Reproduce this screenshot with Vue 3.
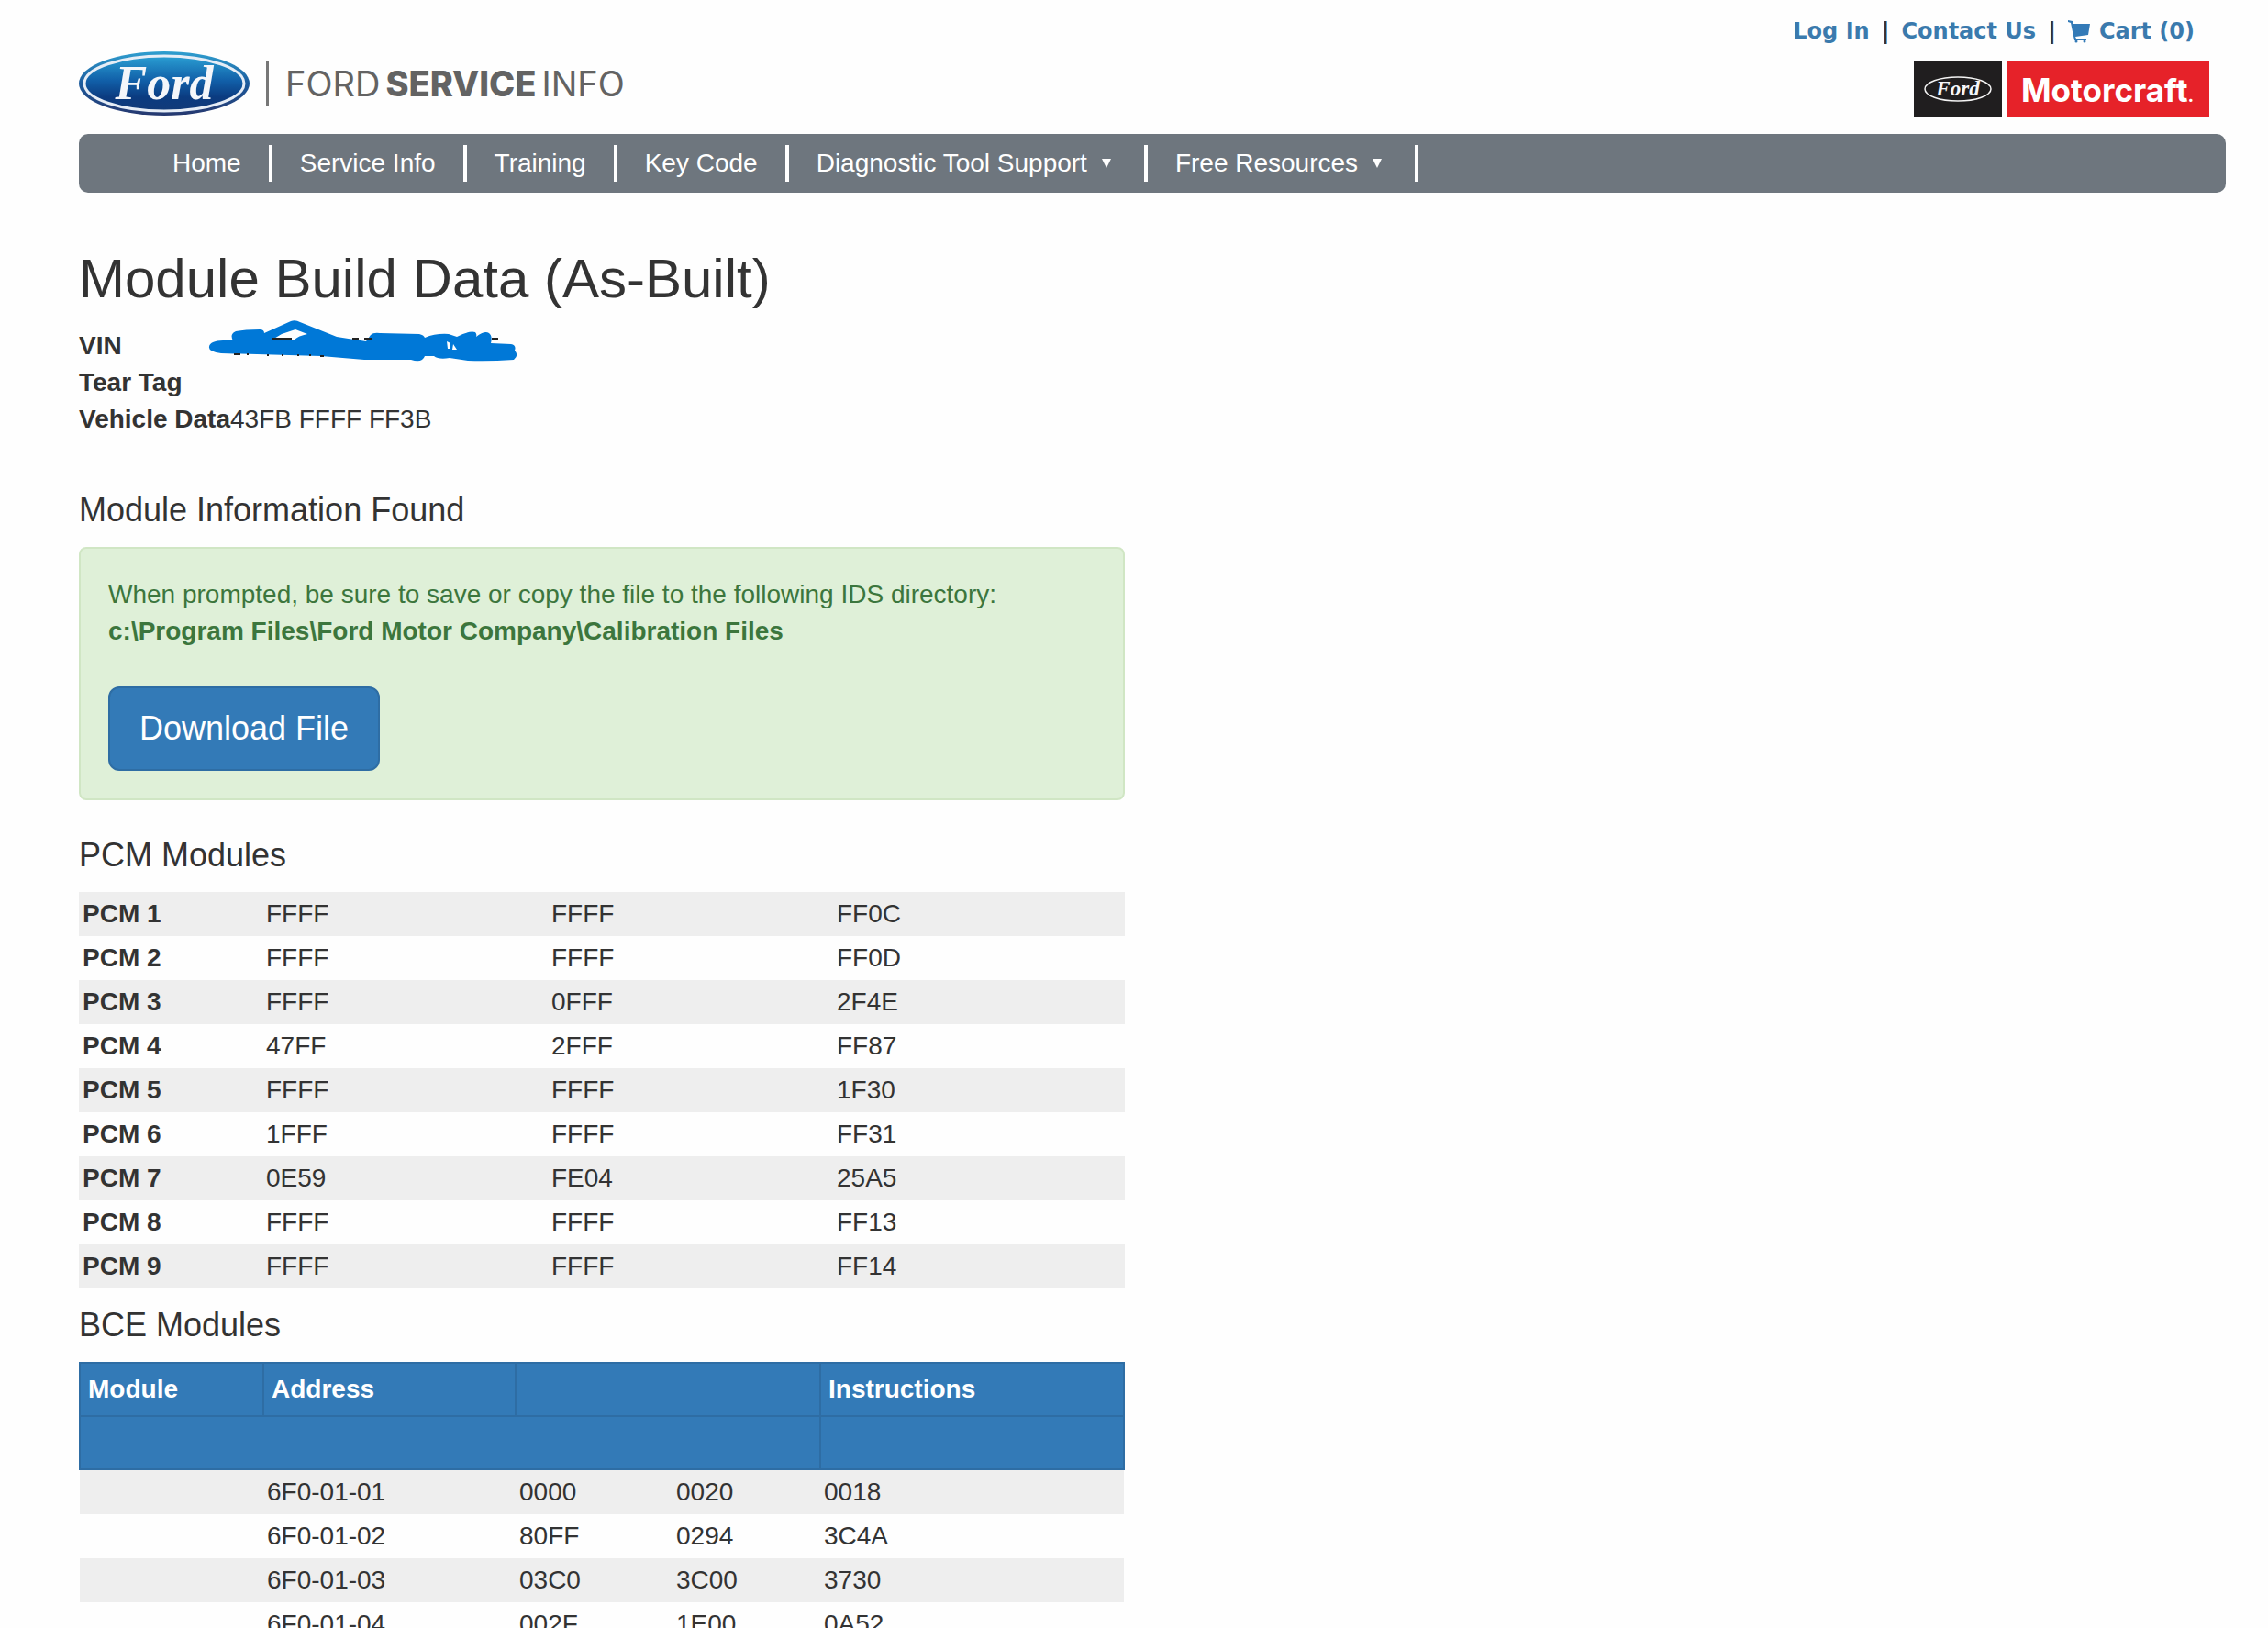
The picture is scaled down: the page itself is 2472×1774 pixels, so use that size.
<script setup>
const navItems = [
    { text: 'Home' },
    { text: 'Service Info' },
    { text: 'Training' },
    { text: 'Key Code' },
    { text: 'Diagnostic Tool Support', menu: true },
    { text: 'Free Resources', menu: true }
]

const pcmModules = [
    ['PCM 1', 'FFFF', 'FFFF', 'FF0C'],
    ['PCM 2', 'FFFF', 'FFFF', 'FF0D'],
    ['PCM 3', 'FFFF', '0FFF', '2F4E'],
    ['PCM 4', '47FF', '2FFF', 'FF87'],
    ['PCM 5', 'FFFF', 'FFFF', '1F30'],
    ['PCM 6', '1FFF', 'FFFF', 'FF31'],
    ['PCM 7', '0E59', 'FE04', '25A5'],
    ['PCM 8', 'FFFF', 'FFFF', 'FF13'],
    ['PCM 9', 'FFFF', 'FFFF', 'FF14']
]

const bceModules = [
    ['6F0-01-01', '0000', '0020', '0018'],
    ['6F0-01-02', '80FF', '0294', '3C4A'],
    ['6F0-01-03', '03C0', '3C00', '3730'],
    ['6F0-01-04', '002F', '1E00', '0A52']
]
</script>

<template>
    <div class="page">
        <header class="siteHeader">
            <a class="siteLogo" href="#">
                <svg class="fordOval" viewBox="0 0 186 72" role="img" aria-label="Ford">
                    <defs>
                        <linearGradient id="ovalRim" x1="0" y1="0" x2="0" y2="1">
                            <stop offset="0" stop-color="#2f9fd0" />
                            <stop offset="0.5" stop-color="#1c5a9c" />
                            <stop offset="1" stop-color="#26386f" />
                        </linearGradient>
                        <linearGradient id="ovalFill" x1="0" y1="0" x2="0" y2="1">
                            <stop offset="0" stop-color="#2a9fd3" />
                            <stop offset="0.45" stop-color="#115fa8" />
                            <stop offset="0.75" stop-color="#0b3b80" />
                            <stop offset="1" stop-color="#123a78" />
                        </linearGradient>
                    </defs>
                    <ellipse cx="93" cy="36" rx="93" ry="35" fill="url(#ovalRim)" />
                    <ellipse cx="93" cy="36" rx="87" ry="30" fill="url(#ovalFill)" stroke="#e6edf6" stroke-width="3" />
                    <text class="script" x="93" y="53" font-size="52" text-anchor="middle">Ford</text>
                </svg>
                <span class="logoRule"></span>
                <span class="logoText"><span>FORD</span><b>SERVICE</b><span>INFO</span></span>
            </a>
            <div class="headerRight">
                <div class="userLinks">
                    <a href="#">Log In</a>
                    <span class="bar">|</span>
                    <a href="#">Contact Us</a>
                    <span class="bar">|</span>
                    <a class="cart" href="#">
                        <svg class="cartIcon" viewBox="0 0 24 25" aria-hidden="true">
                            <path d="M0 0L5 1L6 4H24L22 16L8 18L9 20H20V22H7L3 3L0 2z" />
                            <circle cx="9" cy="23" r="1.5" />
                            <circle cx="18" cy="23" r="1.5" />
                        </svg>
                        <span>Cart (0)</span>
                    </a>
                </div>
                <div class="brands">
                    <svg class="fordBadge" viewBox="0 0 96 60" role="img" aria-label="Ford">
                        <rect width="96" height="60" fill="#201e1f" />
                        <ellipse cx="48" cy="30" rx="36" ry="13" fill="none" stroke="#f4f4f4" stroke-width="1.5" />
                        <text class="script" x="48" y="37" font-size="23" text-anchor="middle">Ford</text>
                    </svg>
                    <span class="motorcraft">Motorcraft<small>.</small></span>
                </div>
            </div>
        </header>

        <nav class="mainNav">
            <a v-for="item in navItems" :key="item.text" href="#">
                {{ item.text }}
                <span v-if="item.menu" class="caret"></span>
            </a>
        </nav>

        <main class="content">
            <h1>Module Build Data (As-Built)</h1>
            <dl class="vehicle">
                <dt>VIN</dt>
                <dd class="vin">
                    <!-- VIN is scribbled out -->
                    <svg class="scribble" viewBox="0 0 340 60" role="img" aria-label="VIN hidden">
                        <path class="ink" d="M5 31Q9 29 16 29L27 29Q23 22 30 19Q40 17 56 17Q61 17 61 21L90 8Q95 6 100 9L140 25L172 30L177 23Q180 20 187 21L230 22Q235 23 236 26Q248 21 262 22L271 25Q285 18 291 20Q293 22 292 25Q301 18 306 21Q310 24 308 32L330 33Q336 34 334 40Q339 45 333 50Q305 52 283 51L263 48Q251 50 246 46H236Q233 54 221 50H170L123 46L14 43Q0 41 1 36Q1 33 5 31Z" />
                        <path class="gap" d="M70 28L80 22L95 17L108 22Q98 24 94 28Z M260 30L264 32V38H261Z M267 33L271 39H266Z" />
                        <path class="remains" d="M70 27h21M157 27h7M170 27h8M309 27h7M28 44h7M42 44h2M64 45h2M80 45h2M97 45h2M110 45h2M122 46h4" />
                    </svg>
                </dd>
                <dt>Tear Tag</dt>
                <dd></dd>
                <dt>Vehicle Data</dt>
                <dd>43FB FFFF FF3B</dd>
            </dl>

            <h2>Module Information Found</h2>
            <div class="alert">
                <p>When prompted, be sure to save or copy the file to the following IDS directory:</p>
                <p><strong>c:\Program Files\Ford Motor Company\Calibration Files</strong></p>
                <button type="button" class="downloadButton">Download File</button>
            </div>

            <h2>PCM Modules</h2>
            <table class="pcmTable">
                <colgroup>
                    <col class="pcmName">
                    <col class="pcmValue">
                    <col class="pcmValue">
                    <col>
                </colgroup>
                <tbody>
                    <tr v-for="row in pcmModules" :key="row[0]">
                        <th scope="row">{{ row[0] }}</th>
                        <td v-for="(value, i) in row.slice(1)" :key="i">{{ value }}</td>
                    </tr>
                </tbody>
            </table>

            <h2>BCE Modules</h2>
            <table class="bceTable">
                <colgroup>
                    <col class="bceModule">
                    <col class="bceAddress">
                    <col class="bceFirst">
                    <col class="bceSecond">
                    <col>
                </colgroup>
                <thead>
                    <tr>
                        <th>Module</th>
                        <th>Address</th>
                        <th colspan="2"></th>
                        <th>Instructions</th>
                    </tr>
                    <tr>
                        <th colspan="4"></th>
                        <th></th>
                    </tr>
                </thead>
                <tbody>
                    <tr v-for="row in bceModules" :key="row[0]">
                        <td></td>
                        <td v-for="(value, i) in row" :key="i">{{ value }}</td>
                    </tr>
                </tbody>
            </table>
        </main>
    </div>
</template>

<style>
body {
    margin: 0;
    background-color: #fefefe;
}
</style>

<style scoped>
.page {
    box-sizing: border-box;
    height: 100vh;
    overflow: hidden;
    padding: 0 46px 0 86px;
    font-family: "Liberation Sans", Arial, sans-serif;
    font-size: 28px;
    line-height: 40px;
    color: #333;
}
a {
    text-decoration: none;
}

/* Header */
.siteHeader {
    display: flex;
    justify-content: space-between;
    align-items: flex-end;
    padding: 16px 18px 19px 0;
}
.siteLogo {
    display: flex;
    align-items: center;
    color: #636363;
}
.fordOval {
    width: 186px;
    height: 72px;
}
.script {
    font-family: "Liberation Serif", "Times New Roman", serif;
    font-weight: bold;
    font-style: italic;
    fill: #f4f6fa;
}
.logoRule {
    width: 3px;
    height: 48px;
    margin: 0 18px;
    background-color: #777;
}
.logoText {
    display: flex;
    gap: 6px;
    font-family: Inter, sans-serif;
    font-size: 38px;
}
.logoText b {
    font-weight: 800;
}
.headerRight {
    display: flex;
    flex-direction: column;
    align-items: flex-end;
    gap: 15px;
}
.userLinks {
    display: flex;
    gap: 13px;
    padding-right: 16px;
    font-family: Verdana, "DejaVu Sans", sans-serif;
    font-size: 24px;
    font-weight: bold;
    line-height: 36px;
}
.userLinks a {
    color: #3a7aad;
}
.cart {
    display: flex;
    align-items: center;
    gap: 10px;
}
.cartIcon {
    width: 24px;
    height: 25px;
    fill: #337ab7;
}
.brands {
    display: flex;
    gap: 5px;
}
.fordBadge {
    width: 96px;
    height: 60px;
}
.motorcraft {
    box-sizing: border-box;
    width: 221px;
    height: 60px;
    padding-left: 16px;
    background-color: #e62229;
    color: #fff;
    font-family: Inter, sans-serif;
    font-size: 35px;
    font-weight: bold;
    line-height: 62px;
}
.motorcraft small {
    font-size: 20px;
}

/* Navigation */
.mainNav {
    display: flex;
    padding: 12px 72px;
    background-color: #6e767e;
    border-radius: 10px;
}
.mainNav a {
    display: flex;
    align-items: center;
    padding: 0 30px;
    border-right: 4px solid #fff;
    color: #fff;
}
.caret {
    margin: 0 6px 0 16px;
    border-left: 5px solid transparent;
    border-right: 5px solid transparent;
    border-top: 10px solid #fff;
}

/* Content */
.content {
    max-width: 1140px;
}
h1 {
    margin: 61px 0 20px;
    font-size: 60px;
    font-weight: normal;
    line-height: 66px;
}
h2 {
    margin: 20px 0;
    font-size: 36px;
    font-weight: normal;
    line-height: 40px;
}
.vehicle {
    display: grid;
    grid-template-columns: 165px 1fr;
    grid-auto-rows: 40px;
    margin: 0 0 59px;
}
.vehicle dt {
    font-weight: bold;
    white-space: nowrap;
}
.vehicle dd {
    margin: 0;
}
.vin {
    position: relative;
}
.scribble {
    position: absolute;
    left: -24px;
    top: -15px;
    width: 340px;
    height: 60px;
}
.remains {
    stroke: #222;
    stroke-width: 2;
}
.ink {
    fill: #0078d7;
}
.gap {
    fill: #fefefe;
}
.alert {
    margin-bottom: 40px;
    padding: 30px;
    background-color: #dff0d8;
    border: 2px solid #d0e6c4;
    border-radius: 8px;
    color: #3c763d;
}
.alert p {
    margin: 0;
}
.downloadButton {
    display: block;
    margin-top: 40px;
    padding: 20px 32px;
    background-color: #337ab7;
    border: 2px solid #2e6da4;
    border-radius: 12px;
    color: #fff;
    font-family: inherit;
    font-size: 36px;
    line-height: 48px;
    cursor: pointer;
}

/* Module tables */
table {
    width: 100%;
    table-layout: fixed;
    border-collapse: collapse;
    text-align: left;
}
tbody th,
tbody td {
    padding: 4px;
}
tbody tr:nth-child(odd) {
    background-color: #eee;
}
.pcmName {
    width: 200px;
}
.pcmValue {
    width: 311px;
}
.bceModule {
    width: 200px;
}
.bceAddress {
    width: 275px;
}
.bceFirst {
    width: 171px;
}
.bceSecond {
    width: 161px;
}
.bceTable thead {
    background-color: #337ab7;
    border: 2px solid #2e6da4;
    color: #fff;
}
.bceTable thead th {
    box-sizing: border-box;
    height: 58px;
    padding: 8px;
    border: 2px solid #2e6da4;
}
</style>
